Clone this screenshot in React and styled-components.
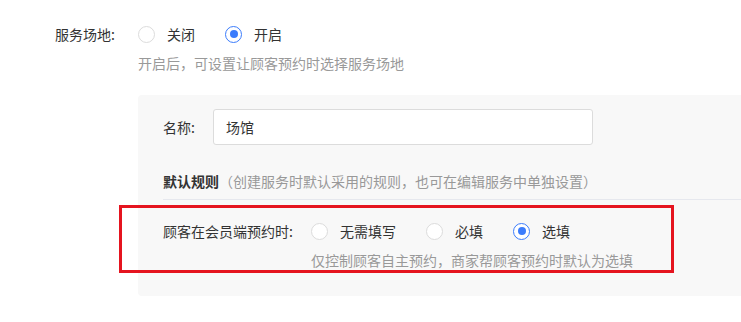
import React, { useState } from "react";
import styled, { createGlobalStyle } from "styled-components";

const GlobalStyle = createGlobalStyle`
  html, body {
    margin: 0;
    padding: 0;
    background: #fff;
    overflow: hidden;
  }
  body {
    font-family: "Noto Sans CJK SC", "Noto Sans", sans-serif;
    font-size: 14px;
    color: #333;
  }
`;

export default function App() {
  const [venue, setVenue] = useState("on");
  const [fill, setFill] = useState("optional");

  return (
    <Page>
      <GlobalStyle />
      <FieldRow>
        <FieldLabel>服务场地:</FieldLabel>
        <RadioGroup
          options={[
            { value: "off", label: "关闭" },
            { value: "on", label: "开启" },
          ]}
          value={venue}
          onChange={setVenue}
        />
      </FieldRow>
      <Hint $indent={83}>开启后，可设置让顾客预约时选择服务场地</Hint>

      {venue === "on" && (
        <Panel>
          <NameRow>
            <NameLabel>名称:</NameLabel>
            <TextInput defaultValue="场馆" />
          </NameRow>

          <RuleTitle>
            <strong>默认规则</strong>
            <span>（创建服务时默认采用的规则，也可在编辑服务中单独设置）</span>
          </RuleTitle>

          <RuleRow>
            <FieldRow>
              <RuleLabel>顾客在会员端预约时:</RuleLabel>
              <RadioGroup
                options={[
                  { value: "none", label: "无需填写" },
                  { value: "required", label: "必填" },
                  { value: "optional", label: "选填" },
                ]}
                value={fill}
                onChange={setFill}
              />
            </FieldRow>
            <Hint $indent={148}>仅控制顾客自主预约，商家帮顾客预约时默认为选填</Hint>
          </RuleRow>
        </Panel>
      )}
    </Page>
  );
}

function RadioGroup({ options, value, onChange }) {
  return (
    <Options>
      {options.map((opt) => (
        <Option key={opt.value} onClick={() => onChange(opt.value)}>
          <RadioDot $checked={opt.value === value} />
          <OptionText>{opt.label}</OptionText>
        </Option>
      ))}
    </Options>
  );
}

// Styles
const Page = styled.div`
  padding: 18px 0 0 55px;
`;

const FieldRow = styled.div`
  display: flex;
  align-items: center;
  height: 32px;
`;

const FieldLabel = styled.label`
  width: 83px;
  flex-shrink: 0;
  color: #333;
`;

const Options = styled.div`
  display: flex;
  align-items: center;
`;

const Option = styled.label`
  display: flex;
  align-items: center;
  margin-right: 30px;
  cursor: pointer;
  color: #333;
`;

const OptionText = styled.span`
  margin-left: 12px;
`;

const RadioDot = styled.span`
  position: relative;
  flex-shrink: 0;
  box-sizing: border-box;
  width: 17px;
  height: 17px;
  border-radius: 50%;
  background: #fff;
  border: ${(p) => (p.$checked ? "1.5px solid #3b7cfc" : "1px solid #dcdcdc")};

  &::after {
    content: "";
    display: ${(p) => (p.$checked ? "block" : "none")};
    position: absolute;
    top: 50%;
    left: 50%;
    width: 8px;
    height: 8px;
    margin: -4px 0 0 -4px;
    border-radius: 50%;
    background: #3b7cfc;
  }
`;

const Hint = styled.div`
  margin: 3px 0 0 ${(p) => p.$indent}px;
  line-height: 20px;
  color: #999;
`;

const Panel = styled.div`
  box-sizing: border-box;
  margin: 22px 0 0 83px;
  width: calc(100vw - 138px);
  padding: 14px 0 26px 25px;
  background: #f8f8f8;
  border-radius: 4px 0 0 4px;
`;

const NameRow = styled.div`
  display: flex;
  align-items: center;
`;

const NameLabel = styled.label`
  width: 50px;
  flex-shrink: 0;
`;

const TextInput = styled.input`
  box-sizing: border-box;
  width: 380px;
  height: 36px;
  padding: 0 12px;
  border: 1px solid #dcdcdc;
  border-radius: 3px;
  background: #fff;
  font-family: inherit;
  font-size: 14px;
  color: #333;
  outline: none;
`;

const RuleTitle = styled.div`
  margin-top: 26px;
  padding-bottom: 8px;
  line-height: 20px;
  border-bottom: 1px solid #e6e8ee;

  strong {
    font-weight: bold;
    color: #333;
  }

  span {
    color: #999;
  }
`;

const RuleRow = styled.div`
  position: relative;
  margin-top: 15px;

  &::after {
    content: "";
    position: absolute;
    top: -10px;
    bottom: -3px;
    left: -44px;
    width: 555px;
    border: 3px solid #e5141f;
    box-sizing: border-box;
    pointer-events: none;
  }
`;

const RuleLabel = styled.label`
  width: 148px;
  flex-shrink: 0;
`;
